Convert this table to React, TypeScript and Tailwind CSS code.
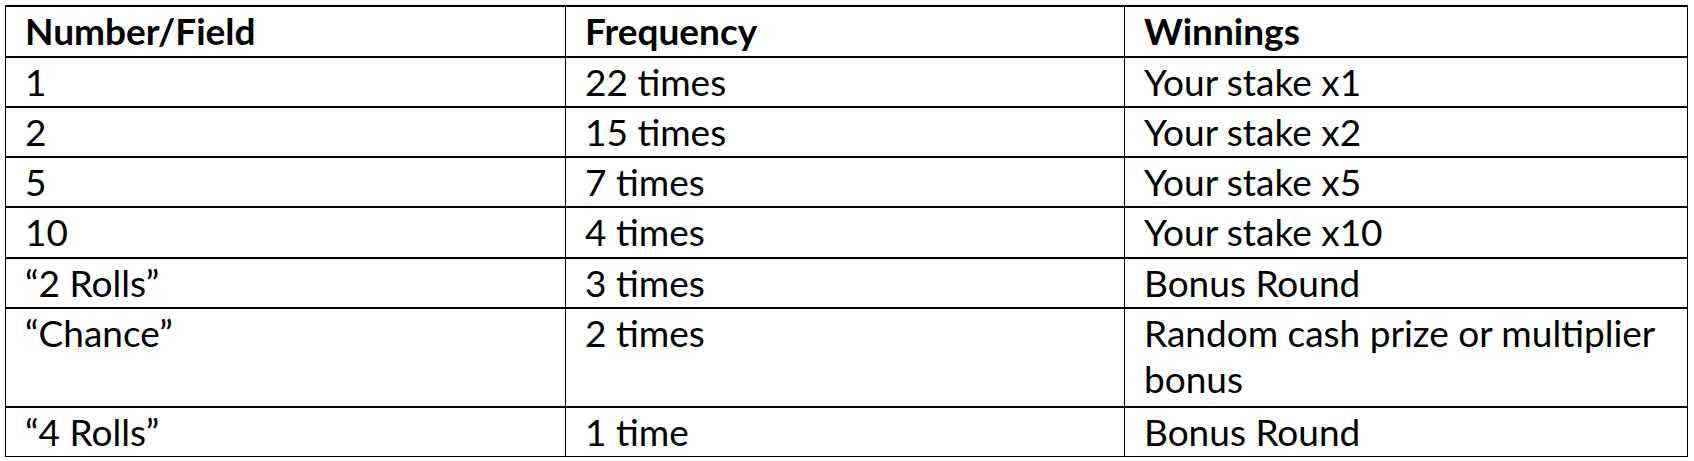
const rows: { field: string; freq: string; win: string }[] = [
  { field: "1", freq: "22 times", win: "Your stake x1" },
  { field: "2", freq: "15 times", win: "Your stake x2" },
  { field: "5", freq: "7 times", win: "Your stake x5" },
  { field: "10", freq: "4 times", win: "Your stake x10" },
  { field: "\u201C2 Rolls\u201D", freq: "3 times", win: "Bonus Round" },
  { field: "\u201CChance\u201D", freq: "2 times", win: "Random cash prize or multiplier bonus" },
  { field: "\u201C4 Rolls\u201D", freq: "1 time", win: "Bonus Round" },
];

export default function App() {
  return (
    <div className="min-h-[461px] w-[1694px] bg-white pl-[5px] pt-[5px] font-['Lato',_'Open_Sans',_sans-serif] text-[37px] leading-[46px] text-black">
      <table className="w-[1682px] table-fixed border-collapse border-l border-r border-black">
        <colgroup>
          <col className="w-[560px]" />
          <col className="w-[559px]" />
          <col className="w-[563px]" />
        </colgroup>
        <thead>
          <tr className="border-y-2 border-black">
            <th className="border-r border-black px-[19px] pb-[1.5px] pt-[1px] text-left align-top font-bold">Number/Field</th>
            <th className="border-r border-black px-[19px] pb-[1.5px] pt-[1px] text-left align-top font-bold">Frequency</th>
            <th className="px-[19px] pb-[1.5px] pt-[1px] text-left align-top font-bold">Winnings</th>
          </tr>
        </thead>
        <tbody>
          {rows.map((r, i) => (
            <tr key={r.field} className={i === rows.length - 1 ? "border-b border-black" : "border-b-2 border-black"}>
              <td className="border-r border-black px-[19px] pb-[1.25px] pt-[1px] align-top">{r.field}</td>
              <td className="border-r border-black px-[19px] pb-[1.25px] pt-[1px] align-top">{r.freq}</td>
              <td className={r.win.length > 20 ? "pb-[4px] pl-[19px] pr-[30px] pt-[1px] align-top" : "pb-[1.25px] pl-[19px] pr-[30px] pt-[1px] align-top"}>
                {r.win}
              </td>
            </tr>
          ))}
        </tbody>
      </table>
    </div>
  );
}
